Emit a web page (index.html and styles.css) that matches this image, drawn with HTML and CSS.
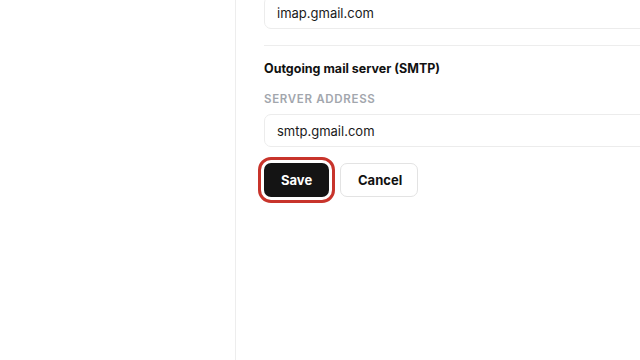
FILE: index.html
```html
<!DOCTYPE html>
<html lang="en">
<head>
    <meta charset="UTF-8">
    <meta name="viewport" content="width=device-width, initial-scale=1.0">
    <title>Mail settings</title>
    <link rel="stylesheet" href="styles.css">
</head>
<body>
    <div class="layout">
        <aside class="sidebar"></aside>
        <main class="content">
            <div class="field">
                <input class="text-input" type="text" value="imap.gmail.com">
            </div>
            <hr class="divider">
            <h2 class="section-title">Outgoing mail server (SMTP)</h2>
            <div class="field">
                <label class="field-label">Server address</label>
                <input class="text-input" type="text" value="smtp.gmail.com">
            </div>
            <div class="actions">
                <button class="btn btn-primary">Save</button>
                <button class="btn btn-secondary">Cancel</button>
            </div>
        </main>
    </div>
</body>
</html>
```
FILE: styles.css
```css
* {
    box-sizing: border-box;
}
body {
    margin: 0;
    font-family: Inter, "Noto Sans", sans-serif;
    background: #ffffff;
    color: #111111;
    overflow: hidden;
}
.layout {
    display: flex;
    height: 360px;
    overflow: hidden;
}
.sidebar {
    width: 236px;
    flex-shrink: 0;
    border-right: 1px solid #ededed;
}
.content {
    flex: 1;
    min-width: 0;
    overflow: hidden;
    padding: 0 0 0 28px;
}
.field {
    display: flex;
    flex-direction: column;
    margin-right: -40px;
}
.field:first-child {
    margin-top: -4px;
}
.field-label {
    font-size: 11.5px;
    font-weight: 600;
    letter-spacing: 0.06em;
    text-transform: uppercase;
    color: #a2a6ad;
    margin-bottom: 8px;
}
.text-input {
    height: 33px;
    border: 1px solid #ececec;
    border-radius: 7px;
    padding: 0 12px;
    font-family: inherit;
    font-size: 13px;
    color: #1a1a1a;
    background: #fff;
    outline: none;
}
.divider {
    border: none;
    border-top: 1px solid #ededed;
    margin: 16px 0 0;
}
.section-title {
    font-size: 12.5px;
    font-weight: 700;
    margin: 15px 0 16px;
}
.actions {
    display: flex;
    gap: 11px;
    margin-top: 16px;
    padding-bottom: 8px;
}
.btn {
    height: 34px;
    padding: 0 17px;
    border-radius: 7px;
    font-family: inherit;
    font-size: 13px;
    font-weight: 700;
    cursor: pointer;
}
.btn-primary {
    background: #141414;
    color: #fff;
    border: none;
    width: 65px;
    outline: 3px solid #c8342b;
    outline-offset: 3px;
}
.btn-secondary {
    background: #fff;
    color: #111;
    border: 1px solid #e3e3e3;
    width: 78px;
}
```
